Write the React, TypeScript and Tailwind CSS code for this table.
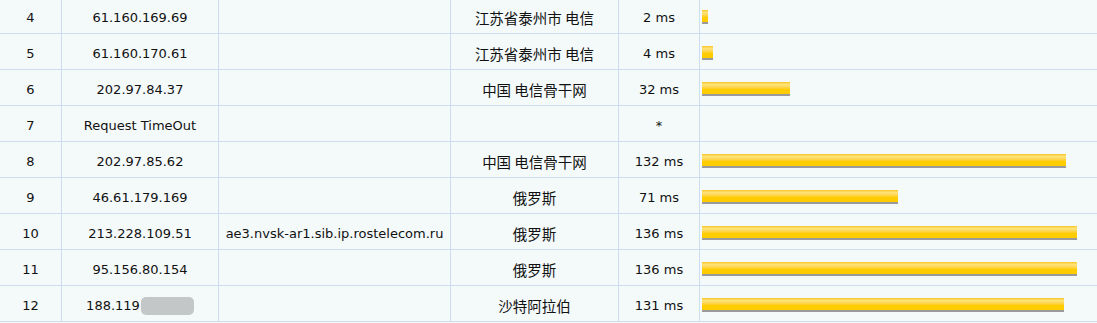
import React from 'react';

type Hop = {
  no: number;
  ip: string;
  host?: string;
  loc?: string;
  ms?: number;
  masked?: boolean;
};

const hops: Hop[] = [
  { no: 4, ip: '61.160.169.69', loc: '江苏省泰州市 电信', ms: 2 },
  { no: 5, ip: '61.160.170.61', loc: '江苏省泰州市 电信', ms: 4 },
  { no: 6, ip: '202.97.84.37', loc: '中国 电信骨干网', ms: 32 },
  { no: 7, ip: 'Request TimeOut' },
  { no: 8, ip: '202.97.85.62', loc: '中国 电信骨干网', ms: 132 },
  { no: 9, ip: '46.61.179.169', loc: '俄罗斯', ms: 71 },
  { no: 10, ip: '213.228.109.51', host: 'ae3.nvsk-ar1.sib.ip.rostelecom.ru', loc: '俄罗斯', ms: 136 },
  { no: 11, ip: '95.156.80.154', loc: '俄罗斯', ms: 136 },
  { no: 12, ip: '188.119', loc: '沙特阿拉伯', ms: 131, masked: true },
];

const cell = 'flex items-center justify-center border-r border-b border-[#cfdcef] pt-[4px]';

function Bar({ ms }: { ms: number }) {
  return (
    <div
      className="h-[14px] border-b-2 border-[#9a9a9a] bg-linear-to-b from-[#f7c600] via-[#ffe37a] via-20% to-[#ffcc00] to-60%"
      style={{ width: Math.max(5, Math.round(ms * 2.76)) }}
    />
  );
}

export default function App() {
  return (
    <div className="w-[1097px] h-[323px] overflow-hidden bg-[#f4f9fa]">
      <div
        className="-mt-[2px] text-[13px] text-[#111]"
        style={{ fontFamily: '"DejaVu Sans", "Noto Sans CJK SC", sans-serif' }}
      >
        {hops.map((h) => (
          <div
            key={h.no}
            className="grid h-[36px] grid-cols-[62px_157px_232px_168px_81px_1fr]"
          >
            <div className={cell}>{h.no}</div>
            <div className={cell}>
              <span>{h.ip}</span>
              {h.masked && (
                <span className="ml-[1px] inline-block h-[18px] w-[53px] rounded-[5px] bg-[#c4c7c7] blur-[0.6px]" />
              )}
            </div>
            <div className={cell}>{h.host}</div>
            <div
              className={`${cell} text-[14.5px]`}
              style={{ fontFamily: '"Noto Sans CJK SC", sans-serif' }}
            >
              {h.loc}
            </div>
            <div className={cell}>{h.ms !== undefined ? `${h.ms} ms` : '*'}</div>
            <div className="flex items-center border-b border-[#cfdcef] pl-[2px] pt-[2px]">
              {h.ms !== undefined && <Bar ms={h.ms} />}
            </div>
          </div>
        ))}
      </div>
    </div>
  );
}
